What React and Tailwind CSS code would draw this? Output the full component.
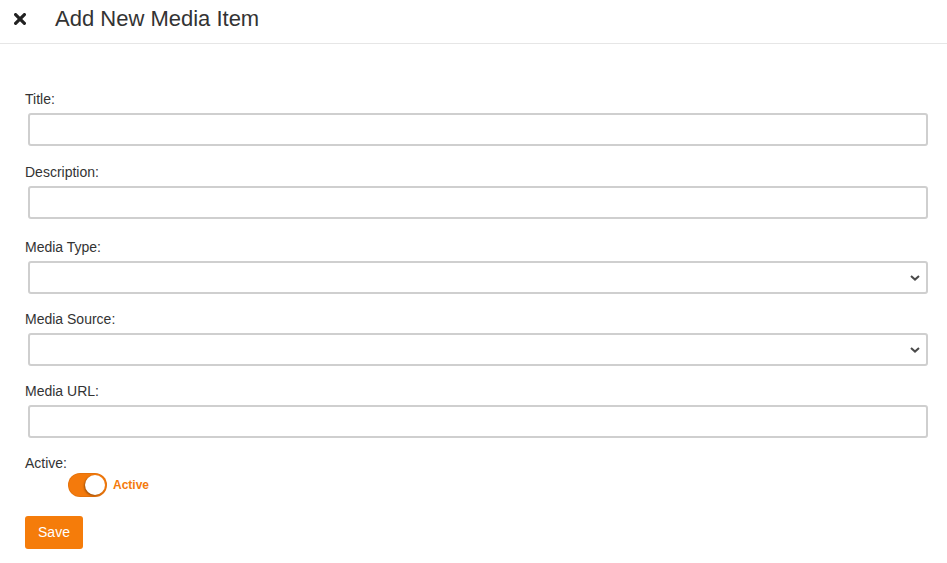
import { useState } from 'react';

const Chevron = () => (
  <svg
    className="pointer-events-none absolute right-[8px] top-1/2 -translate-y-1/2"
    width="10"
    height="6"
    viewBox="0 0 10 6"
  >
    <path d="M1 1l4 3.6L9 1" fill="none" stroke="#4a4a4a" strokeWidth="2" />
  </svg>
);

function Field({ label, gap = 'mb-[16px]', children }) {
  return (
    <div className={gap}>
      <label className="block text-[14px] leading-[20px] text-[#333] mb-[4px]">{label}</label>
      <div className="relative ml-[3px] mr-[19px]">{children}</div>
    </div>
  );
}

export default function App() {
  const [active, setActive] = useState(true);
  const inputCls =
    'block w-full h-[33px] px-3 bg-white border-2 border-[#cfcfcf] rounded-[3px] text-[14px] text-[#333] focus:outline-none';

  return (
    <div className="w-[947px] h-[563px] bg-white font-['Liberation_Sans',Arial,sans-serif] text-[#333]">
      <div className="h-[44px] flex items-center border-b border-[#e6e6e6]">
        <button className="w-[40px] pl-[14px] flex items-center -mt-[5px]">
          <svg width="12" height="12" viewBox="0 0 12 12">
            <path d="M1.6 1.6l8.8 8.8M10.4 1.6l-8.8 8.8" stroke="#222" strokeWidth="3.2" strokeLinecap="round" />
          </svg>
        </button>
        <h1 className="ml-[15px] text-[22px] leading-[26px] text-[#333] -mt-[6px]">Add New Media Item</h1>
      </div>

      <form className="pt-[45px] pl-[25px]" onSubmit={(e) => e.preventDefault()}>
        <Field label="Title:">
          <input type="text" className={inputCls} />
        </Field>
        <Field label="Description:" gap="mb-[18px]">
          <input type="text" className={inputCls} />
        </Field>
        <Field label="Media Type:" gap="mb-[15px]">
          <select className={`${inputCls} appearance-none`}>
            <option value=""></option>
          </select>
          <Chevron />
        </Field>
        <Field label="Media Source:" gap="mb-[15px]">
          <select className={`${inputCls} appearance-none`}>
            <option value=""></option>
          </select>
          <Chevron />
        </Field>
        <Field label="Media URL:">
          <input type="text" className={inputCls} />
        </Field>

        <div>
          <label className="block text-[14px] leading-[19px] text-[#333]">Active:</label>
          <div className="flex items-center ml-[43px] h-[24px]">
            <button
              type="button"
              onClick={() => setActive(!active)}
              className="relative w-[39px] h-[24px] rounded-full bg-[#f47a0c] shadow-[inset_0_0_0_1px_rgba(0,0,0,0.06)]"
            >
              <span className="absolute top-[2px] right-[2px] w-[20px] h-[20px] rounded-full bg-white shadow-[-1px_1px_2px_rgba(0,0,0,0.35)]" />
            </button>
            <span className="ml-[6px] text-[12px] font-bold text-[#f47a0c]">Active</span>
          </div>
        </div>

        <button
          type="submit"
          className="mt-[19px] h-[33px] w-[58px] rounded-[3px] bg-[#f57c0a] text-white text-[14px]"
        >
          Save
        </button>
      </form>
    </div>
  );
}
